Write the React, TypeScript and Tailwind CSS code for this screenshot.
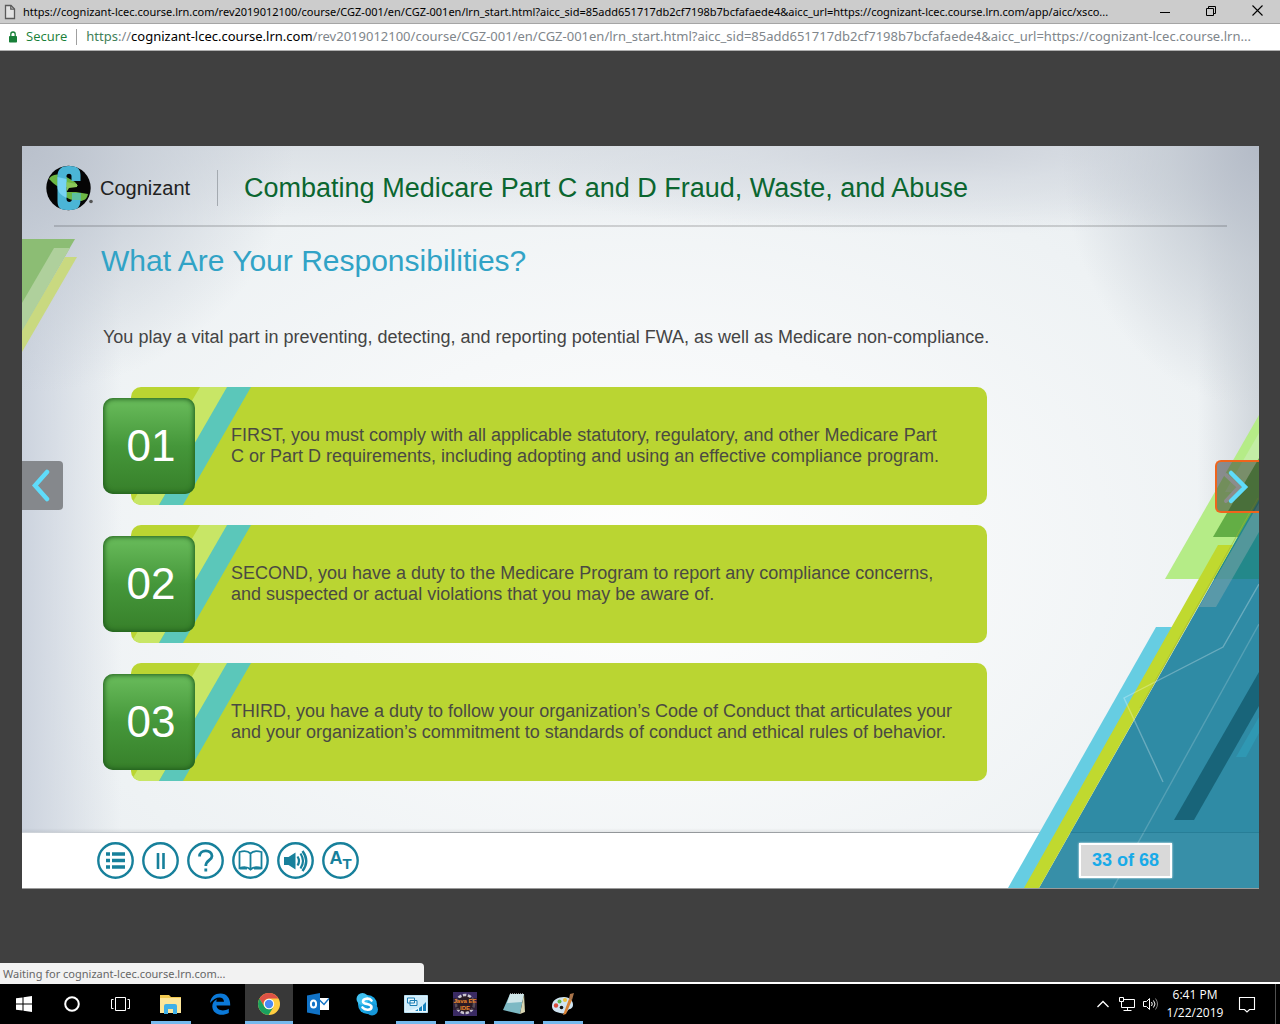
import React from "react";

const SANS = "font-['Liberation_Sans',Arial,sans-serif]";

const cards = [
  {
    num: "01",
    lines: [
      "FIRST, you must comply with all applicable statutory, regulatory, and other Medicare Part",
      "C or Part D requirements, including adopting and using an effective compliance program.",
    ],
  },
  {
    num: "02",
    lines: [
      "SECOND, you have a duty to the Medicare Program to report any compliance concerns,",
      "and suspected or actual violations that you may be aware of.",
    ],
  },
  {
    num: "03",
    lines: [
      "THIRD, you have a duty to follow your organization’s Code of Conduct that articulates your",
      "and your organization’s commitment to standards of conduct and ethical rules of behavior.",
    ],
  },
];

function TitleBar() {
  return (
    <header className="flex h-6 items-center border-b border-[#a5a5a5] bg-[#cccccc] text-black">
      <svg className="ml-1 shrink-0" width="12" height="16" viewBox="0 0 12 16" fill="#e2e2e2" stroke="#5a5a5a" strokeWidth="1.3">
        <path d="M1.5 1.5h5.5l3.500 3.500v9.500h-9z" />
        <path d="M6.800 1.500v3.700h3.500" fill="none" />
      </svg>
      <h1 className="ml-[7px] min-w-0 flex-1 truncate font-['Noto_Sans',sans-serif] text-[11px] leading-5">
        https://cognizant-lcec.course.lrn.com/rev2019012100/course/CGZ-001/en/CGZ-001en/lrn_start.html?aicc_sid=85add651717db2cf7198b7bcfafaede4&amp;aicc_url=https://cognizant-lcec.course.lrn.com/app/aicc/xsco...
      </h1>
      <div className="flex shrink-0">
        <button aria-label="Minimize" className="flex h-5 w-[46px] items-center justify-center">
          <svg width="10" height="10" stroke="#000"><path d="M0 5.500h10" /></svg>
        </button>
        <button aria-label="Restore" className="flex h-5 w-[46px] items-center justify-center">
          <svg width="10" height="12" fill="none" stroke="#000"><path d="M.5 2.500h7v7h-7zM2.500 2.500v-2h7v7h-2" /></svg>
        </button>
        <button aria-label="Close" className="flex h-5 w-[46px] items-center justify-center">
          <svg width="11" height="13" stroke="#000" strokeWidth="1.100"><path d="M.5.5l10 10M10.500.5l-10 10" /></svg>
        </button>
      </div>
    </header>
  );
}

function AddressBar() {
  return (
    <div className="flex h-[27px] items-center border-b border-[#b0b0b0] bg-white">
      <svg className="ml-2 shrink-0" width="10" height="12" viewBox="0 0 10 12">
        <rect x="1" y="5" width="8" height="6.500" rx="0.800" fill="#188038" />
        <path d="M2.800 5.500V3.200a2.200 2.200 0 0 1 4.400 0v2.300" fill="none" stroke="#188038" strokeWidth="1.300" />
      </svg>
      <span className="ml-2 shrink-0 text-[13px] text-[#188038]">Secure</span>
      <span className="mx-[9px] h-4 w-px shrink-0 bg-[#a0a0a0]" />
      <p className="min-w-0 flex-1 truncate font-['Noto_Sans',sans-serif] text-[13px] text-[#80868b]">
        <span className="text-[#3f8058]">https</span>://<span className="text-black">cognizant-lcec.course.lrn.com</span>
        /rev2019012100/course/CGZ-001/en/CGZ-001en/lrn_start.html?aicc_sid=85add651717db2cf7198b7bcfafaede4&amp;aicc_url=https://cognizant-lcec.course.lrn...
      </p>
    </div>
  );
}

function LeftArt() {
  return (
    <svg className="absolute left-0 top-[92px]" width="56" height="116" viewBox="22 238 56 116" aria-hidden="true">
      <path d="M65 257H77L22 352V330z" fill="#c9d980" />
      <path d="M22 239H75L22 330z" fill="#8cbd74" />
      <path d="M54 248H70L22 331V303z" fill="#afd09c" />
    </svg>
  );
}

function RightArt() {
  return (
    <svg className="absolute bottom-0 right-0" width="259" height="488" viewBox="1000 400 259 488" aria-hidden="true">
      <path d="M1259 415L1165 579H1259z" fill="#b5ec87" />
      <path d="M1259 433L1225 492H1240L1259 459z" fill="#c3eda5" />
      <path d="M1259 458L1213 537H1259z" fill="#63ae45" />
      <path d="M1259 500L1039 888H1259z" fill="#2f8ba5" />
      <path d="M1259 500L1214 579H1259z" fill="#23888a" />
      <path d="M1259 503L1199 607H1216L1259 532z" fill="#8faab0" fillOpacity="0.450" />
      <path d="M1156 627H1174L1026 888H1008z" fill="#66cde2" />
      <path d="M1218 545H1233L1039 888H1024z" fill="#c0d92f" />
      <path d="M1258 498L1140 708" stroke="#9db43a" strokeOpacity="0.600" fill="none" />
      <path d="M1259 672L1174 820H1194L1259 706z" fill="#186479" />
      <path d="M1259 717L1236 757H1246L1259 733z" fill="#2f98b3" />
      <g fill="none" stroke="#fff" strokeOpacity="0.280" strokeWidth="1.400">
        <path d="M1259 584L1223 647L1124 698L1163 782" />
        <path d="M1259 624L1113 888" strokeOpacity="0.180" />
      </g>
      <path d="M1071 832.500H1259" stroke="#1f7189" strokeOpacity="0.500" />
      <path d="M1070 833H1259V888H1039z" fill="#fff" fillOpacity="0.040" />
    </svg>
  );
}

function Logo() {
  return (
    <svg className="shrink-0" width="48" height="46" viewBox="0 0 48 46" aria-hidden="true">
      <circle cx="22.500" cy="23" r="22.200" fill="#050505" />
      <path d="M3 14C6 9 12 9 17 10L29 17L32 21L20 22C13 25 7 18 3 14z" fill="#6cb744" />
      <path d="M20 27H30L42 29C41 34 38 36 34 36C28 35 21 36 16 27z" fill="#6cb744" />
      <path d="M11.500 11C11.500 4 16 1 22 1H24C31 1 34.500 4 34.500 10V16H25.500V11C25.500 8 20.500 8 20.500 11V34C20.500 38 26 38 26 34V28H34.500V35C34.500 42 31 45 25 45H20C14 45 11.500 42 11.500 36z" fill="#4bb5d6" />
      <path d="M11.500 12L20.500 14V33C14 30 11.500 26 11.500 22z" fill="#76d3f3" />
      <path d="M20.500 17L31 19V22L23 23L20.500 27z" fill="#8bc85a" />
      <path d="M26 28H34.500V35H26z" fill="#5cc0a0" />
      <circle cx="45" cy="36.500" r="1.800" fill="#555" />
    </svg>
  );
}

function Card({ num, lines }: { num: string; lines: string[] }) {
  return (
    <li className="relative flex h-[118px] items-center rounded-[10px] bg-[#bad532]">
      <span className="absolute inset-0 overflow-hidden rounded-[10px]">
        <svg width="130" height="118" aria-hidden="true">
          <path d="M69 0H97L28 118H3L0 118z" fill="#c8e666" />
          <path d="M96 0H120L52 118H28z" fill="#5bc7ba" />
        </svg>
      </span>
      <span className="relative -ml-7 flex h-24 w-[92px] shrink-0 items-center justify-center rounded-[10px] bg-linear-to-b from-[#6abd5c] via-[#45973a] to-[#37802a] pl-1 text-[44px] leading-none text-white shadow-[inset_0_0_5px_1px_#1f5a1c]">
        {num}
      </span>
      <p className="relative ml-9 text-[18px] leading-[21px] text-[#4a4a42]">
        {lines[0]}
        <br />
        {lines[1]}
      </p>
    </li>
  );
}

const tools: { label: string; icon: React.ReactNode }[] = [
  {
    label: "Menu",
    icon: <path d="M9 12h4M9 18.500h4M9 25h4M15 12h13M15 18.500h13M15 25h13" strokeWidth="3.400" />,
  },
  { label: "Pause", icon: <path d="M16 11v16M21.500 11v16" strokeWidth="2.600" /> },
  {
    label: "Help",
    icon: <path d="M12.500 14.500C12.500 7 25 7 25 14C25 18.500 18.800 18 18.800 24M18.800 26.500v3" strokeWidth="2.800" />,
  },
  {
    label: "Glossary",
    icon: (
      <path
        d="M18.500 11.500C16 9 11 9 7.500 10V26C11 25 16 25 18.500 27.500C21 25 26 25 29.500 26V10C26 9 21 9 18.500 11.500V27M7.500 26.500H15M22 26.500H29.500"
        strokeWidth="1.800"
      />
    ),
  },
  {
    label: "Audio",
    icon: (
      <>
        <path d="M7 15h4.500l7-4.500v17l-7-4.500H7z" fill="#17809b" stroke="none" />
        <path d="M20.500 14.500q3 4.500 0 9M23.500 11.500q5 7.500 0 15" strokeWidth="2.200" />
        <path d="M25.500 9q7.500 10 0 20" strokeWidth="2.400" />
      </>
    ),
  },
  { label: "Text size", icon: null },
];

function Toolbar() {
  return (
    <footer className="flex items-center justify-between bg-white pr-[87px] pl-[75px]">
      <div className="flex h-[55px] items-center gap-2">
        {tools.map((t) => (
          <button
            key={t.label}
            aria-label={t.label}
            className="relative flex size-[37px] items-center justify-center rounded-full"
          >
            <svg width="37" height="37" fill="none" stroke="#17809b" aria-hidden="true">
              <circle cx="18.500" cy="18.500" r="17.200" strokeWidth="2.400" />
              {t.icon}
            </svg>
            {t.icon === null && (
              <span className="absolute inset-0 flex justify-center font-bold leading-none text-[#17809b]">
                <span className="pt-[7px] text-[18px]">A</span>
                <span className="pt-[14px] text-[15px]">T</span>
              </span>
            )}
          </button>
        ))}
      </div>
      <p className="relative border-2 border-white bg-[#d9d9d9] px-[11px] py-1 text-[18px] leading-[23px] font-bold text-[#18aae8] shadow-[0_0_2px_#ffffff]">
        33 of 68
      </p>
    </footer>
  );
}

function Slide() {
  return (
    <section className={`relative mt-[95px] mr-[21px] ml-[22px] flex flex-col border-b border-[#9a9a9a] ${SANS}`}>
      <div className="bg-[radial-gradient(ellipse_22%_36%_at_0%_0%,#b9c0cb_0%,#c3cad4b0_45%,#d0d5dd00_100%),radial-gradient(ellipse_16%_38%_at_100%_0%,#b4bbc7_0%,#c0c7d0b0_45%,#d0d5dd00_100%),radial-gradient(ellipse_40%_13%_at_74%_0%,#ced3db_0%,#d6dbe2b0_40%,#e0e4e800_100%),linear-gradient(to_right,#ccd3de_0%,#d8dee600_8%),linear-gradient(to_left,#d0d6dc_0%,#d8dee400_5%),linear-gradient(to_bottom,#dce1e6_0%,#e6eaee00_12%),radial-gradient(ellipse_66%_80%_at_50%_60%,#fefefe_0%,#f6f8f9_40%,#eef2f4_75%,#e8edf0_100%)]">
        <LeftArt />
        <div className="flex h-[79px] items-center pt-1 pl-6">
          <Logo />
          <span className="ml-[6px] text-[20px] text-[#222222]">Cognizant</span>
          <span className="ml-[27px] h-9 w-px bg-[#a4aab0]" />
          <h2 className="ml-[26px] text-[27px] leading-9 whitespace-nowrap text-[#0b6630]">
            Combating Medicare Part C and D Fraud, Waste, and Abuse
          </h2>
        </div>
        <hr className="mr-8 ml-8 border-t-2 border-black/15" />
        <div className="flex h-[605px] items-start">
          <button
            aria-label="Previous"
            className="mt-[234px] flex h-[49px] w-[41px] shrink-0 items-center justify-center rounded-r-[4px] bg-[#85888c]"
          >
            <svg width="22" height="34" fill="none" stroke="#5fdcfb" strokeWidth="4.500" strokeLinecap="round">
              <path d="M15 3L3 16.500L15 30" />
            </svg>
          </button>
          <div className="relative min-w-0 flex-1 pt-[14px] pl-[38px]">
            <h3 className="text-[30px] leading-10 text-[#31a3c6]">What Are Your Responsibilities?</h3>
            <p className="mt-[46px] ml-[2px] text-[18px] leading-[21px] text-[#444444]">
              You play a vital part in preventing, detecting, and reporting potential FWA, as well as Medicare
              non-compliance.
            </p>
            <ul className="mt-[39px] ml-[30px] flex max-w-[856px] flex-col gap-5">
              {cards.map((c) => (
                <Card key={c.num} {...c} />
              ))}
            </ul>
          </div>
          <div className="w-11 shrink-0" />
        </div>
      </div>
      <div className="h-px bg-linear-to-r from-[#cfd4da] via-[#8f9396] to-[#cfd4da] shadow-[0_-1px_3px_#00000030]" />
      <RightArt />
      <button
        aria-label="Next"
        className="absolute top-[314px] right-0 flex h-[53px] w-11 items-center rounded-l-[6px] border-2 border-r-0 border-[#f0641c] bg-[#303030]/50"
      >
        <svg width="36" height="40" fill="none" strokeLinecap="round">
          <path d="M9 8L22 20L9 34" stroke="#8c8c8c" strokeWidth="4" />
          <path d="M14 6L28 20L14 34" stroke="#5fdcfb" strokeWidth="4.500" />
        </svg>
      </button>
      <Toolbar />
    </section>
  );
}

const taskIcons: { label: string; open?: boolean; active?: boolean; icon: React.ReactNode }[] = [
  {
    label: "Start",
    icon: <path d="M4 6.300L10.500 5.400V11.500H4zM11.500 5.200L20 4V11.500H11.500zM4 12.500H10.500V18.600L4 17.700zM11.500 12.500H20V20L11.500 18.800z" fill="#fff" />,
  },
  { label: "Cortana", icon: <circle cx="11" cy="12" r="6.800" fill="none" stroke="#fff" strokeWidth="2" /> },
  {
    label: "Task View",
    icon: <path d="M5.500 5.500h10v13h-10zM3.500 7.500h-2v9h2M17.500 7.500h2v9h-2" fill="none" stroke="#fff" />,
  },
  {
    label: "File Explorer",
    open: true,
    icon: (
      <>
        <path d="M1 3h9l2 2h10v16H1z" fill="#f2c94f" />
        <path d="M1 6h21v15H1z" fill="#fde69a" />
        <path d="M5 22v-8q0-2 2-2h9q2 0 2 2v8h-4v-5h-5v5z" fill="#3fb0e8" />
      </>
    ),
  },
  {
    label: "Edge",
    icon: (
      <path
        d="M2 11C3 4.500 7 1.500 12.500 1.500C19 1.500 22.500 6.500 22.200 13.500H8.500C9 19 16 19.500 20.800 16.800V21C13 25 4.500 22 4.300 14.500C4.200 11 6 8.500 9 7.200C8.500 8 8.300 9 8.300 9.800H16C16 3.500 7 4 2 11z"
        fill="#0b79d8"
      />
    ),
  },
  {
    label: "Chrome",
    open: true,
    active: true,
    icon: (
      <>
        <circle cx="12" cy="12" r="11" fill="#ffcd40" />
        <path d="M2.500 6.500A11 11 0 0 1 21.500 6.500H12A5.500 5.500 0 0 0 7 14.500z" fill="#de5246" />
        <path d="M2.500 6.500A11 11 0 0 0 11.500 23L16.500 15A5.500 5.500 0 0 1 7.200 14.500z" fill="#1aa15f" />
        <circle cx="12" cy="12" r="5.200" fill="#fff" />
        <circle cx="12" cy="12" r="4.200" fill="#4a8af4" />
      </>
    ),
  },
  {
    label: "Outlook",
    icon: (
      <>
        <path d="M12 6h11v12H12z" fill="#fff" />
        <path d="M13 7.500l5 5 5-6" fill="none" stroke="#1173c7" strokeWidth="1.400" />
        <path d="M1 3.500L14 1V23L1 20.500z" fill="#1173c7" />
        <ellipse cx="7.500" cy="12" rx="2.600" ry="3.600" fill="none" stroke="#fff" strokeWidth="2" />
      </>
    ),
  },
  {
    label: "Skype",
    icon: (
      <>
        <circle cx="12.500" cy="12.500" r="9.500" fill="#1ba8e5" />
        <circle cx="7.500" cy="7" r="6" fill="#3fc0f0" />
        <circle cx="17" cy="17.500" r="6" fill="#1697d8" />
        <path d="M16.500 8.500C14 5.500 8 6.500 8 9.500C8 13 16.500 11 16.500 15C16.500 18.500 10 18.500 7.500 15.500" fill="none" stroke="#fff" strokeWidth="2.600" strokeLinecap="round" />
      </>
    ),
  },
  {
    label: "Remote Desktop",
    open: true,
    icon: (
      <>
        <path d="M.5 3.500h23v17H.5z" fill="#e8f6fd" stroke="#b9e0f2" />
        <path d="M1.500 4.500h21v9l-21 6z" fill="#cdebfa" />
        <path d="M3.500 6h7v5h-7zM6 8.500h7v5H6z" fill="#e6f5fc" stroke="#1c7fb5" />
        <path d="M11 19l3-2v2zM15 19v-3l3-2v5zM19 19v-6l3-3v9z" fill="#1682bd" />
      </>
    ),
  },
  {
    label: "Java EE IDE",
    open: true,
    icon: (
      <>
        <path d="M0 0h24v24H0z" fill="#3a2a63" />
        <circle cx="12" cy="12" r="9" fill="#2a1b25" stroke="#c9c4cf" strokeWidth="2.500" strokeDasharray="3.500 1.500" />
        <path d="M0 6h24v12H0z" fill="#2a1b25" fillOpacity="0.700" />
        <g className="font-['Liberation_Sans',sans-serif] font-bold" fill="#f08a2c" textAnchor="middle">
          <text x="12" y="11" fontSize="6">Java EE</text>
          <text x="12" y="18" fontSize="6">IDE</text>
        </g>
      </>
    ),
  },
  {
    label: "Notepad",
    open: true,
    icon: (
      <>
        <path d="M8 2h14l-4 20L1 18z" fill="#7db9c4" />
        <path d="M8 2h14l-2 8L5 11z" fill="#cfe5e8" />
        <path d="M22 2l1 18-5 2z" fill="#d9d6b2" />
        <path d="M8 1.500h14" stroke="#888" strokeDasharray="1 1" />
      </>
    ),
  },
  {
    label: "Paint",
    open: true,
    icon: (
      <>
        <path d="M1 14C1 8 7 5 13 5C19 5 22 9 22 13C22 17 18 17 17 18C16 21 13 22 9 21C4 20 1 18 1 14z" fill="#cfe4f2" />
        <circle cx="5" cy="13.500" r="2.200" fill="#d84b3b" />
        <circle cx="8.500" cy="9.500" r="2" fill="#5fb54c" />
        <circle cx="14" cy="8" r="2" fill="#efc23b" />
        <circle cx="10.500" cy="15.500" r="1.800" fill="#111" />
        <path d="M12 23L18 7l3 1-6 14z" fill="#d98236" />
        <path d="M18 7l1-5 4-1-2 7z" fill="#a9744a" />
      </>
    ),
  },
];

function Taskbar() {
  return (
    <nav className="flex h-10 items-stretch justify-between bg-black text-white">
      <div className="flex gap-px">
        {taskIcons.map((t) => (
          <button
            key={t.label}
            aria-label={t.label}
            className={`relative flex w-12 items-center justify-center ${t.active ? "bg-[#383838]" : ""}`}
          >
            <svg width="24" height="24" viewBox="0 0 24 24" aria-hidden="true">
              {t.icon}
            </svg>
            {t.open && (
              <span className={`absolute bottom-0 h-[3px] bg-[#76b9ed] ${t.active ? "inset-x-0" : "inset-x-1"}`} />
            )}
          </button>
        ))}
      </div>
      <div className="flex items-center">
        <button aria-label="Show hidden icons" className="flex w-6 justify-center">
          <svg width="14" height="8" fill="none" stroke="#fff" strokeWidth="1.300"><path d="M1.500 7l5.500-5.500L12.500 7" /></svg>
        </button>
        <button aria-label="Network" className="flex w-6 justify-center">
          <svg width="18" height="16" fill="none" stroke="#fff">
            <path d="M5.500 3.500h11v8h-13v-4M1.500 1.500h4v4h-4zM3.500 5.500v3M9.500 11.500v3M5.500 14.500h8" />
          </svg>
        </button>
        <button aria-label="Volume" className="flex w-6 justify-center">
          <svg width="18" height="16" fill="none" stroke="#fff">
            <path d="M1.500 5.500h3l3-3v11l-3-3h-3zM9.500 6q1.500 2 0 4M11.500 4.500q3 3.500 0 7" />
            <path d="M13.500 2.500q4 5.500 0 11" stroke="#888" />
          </svg>
        </button>
        <p className="w-16 text-center font-['Open_Sans',sans-serif] text-[12px] leading-[18px]">
          6:41 PM
          <br />
          1/22/2019
        </p>
        <button aria-label="Notifications" className="mr-[15px] ml-[7px] flex w-[26px] justify-center">
          <svg width="18" height="18" fill="none" stroke="#fff" strokeWidth="1.100"><path d="M1.500 2.500h15v12h-5l-2.500 2.500-2.500-2.500h-5z" /></svg>
        </button>
        <span className="mr-1 h-full w-px bg-[#505050]" />
      </div>
    </nav>
  );
}

export default function App() {
  return (
    <div className="flex min-h-screen flex-col bg-[#404040] font-['Open_Sans','Noto_Sans',sans-serif]">
      <TitleBar />
      <AddressBar />
      <main className="flex flex-1 flex-col">
        <Slide />
      </main>
      <div className="flex items-end bg-[#404040]">
        <p role="status" className="h-[21px] w-[424px] rounded-tr-[4px] bg-[#f2f2f2] pl-[3px] font-['Noto_Sans',sans-serif] text-[11px] leading-[21px] text-[#666666]">
          Waiting for cognizant-lcec.course.lrn.com...
        </p>
        <span className="h-[2px] flex-1 bg-white" />
      </div>
      <Taskbar />
    </div>
  );
}
